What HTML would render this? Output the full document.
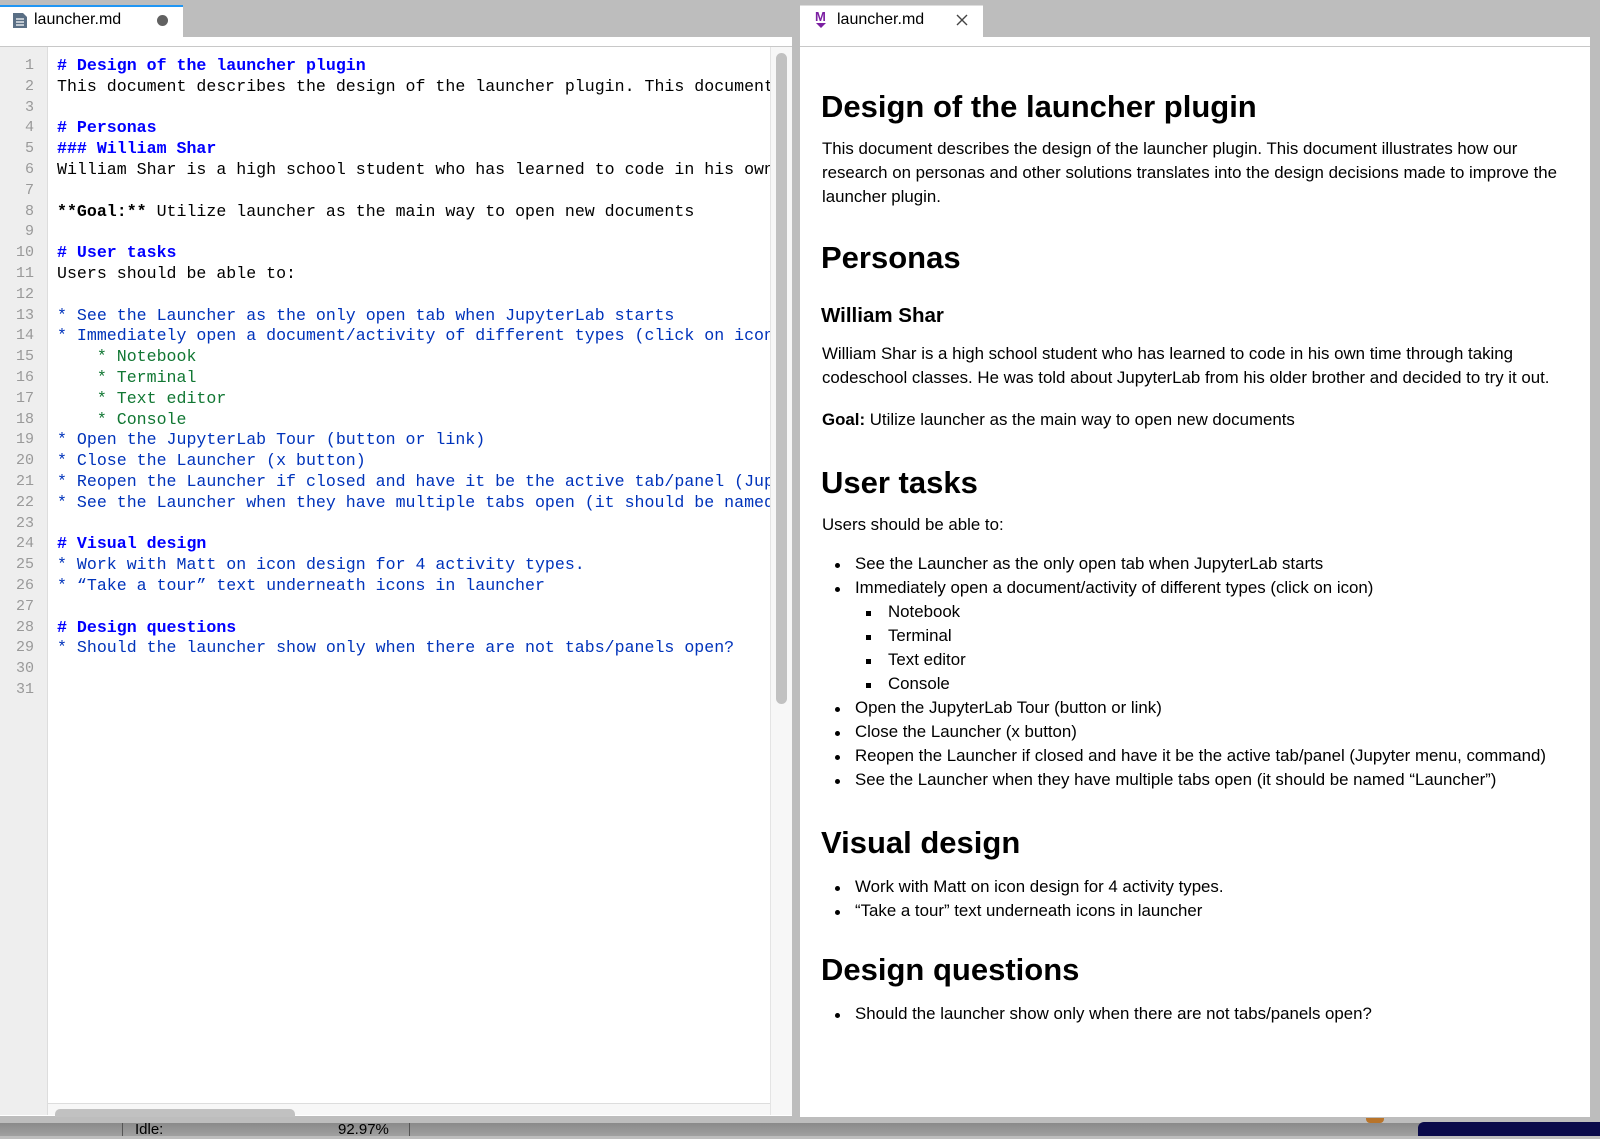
<!DOCTYPE html>
<html><head><meta charset="utf-8"><style>
*{margin:0;padding:0;box-sizing:border-box}
body{width:1600px;height:1136px;background:#bdbdbd;position:relative;overflow:hidden;font-family:"Liberation Sans",Arial,sans-serif}
.a{position:absolute;white-space:pre}
.code{font-family:"Liberation Mono","Courier New",monospace;font-size:16.6px;line-height:20.8px;color:#000}
.ln{font-family:"Liberation Mono",monospace;font-size:15px;line-height:20.8px;color:#999;text-align:right;width:34px;left:0}
.h{color:#0000ff;font-weight:bold}
.b{color:#0033bb}
.g{color:#117733}
.md{font-size:16.85px;line-height:24px;color:#000}
.h1{font-size:31px;font-weight:bold;line-height:40px;color:#000}
.h3{font-size:20.5px;font-weight:bold;line-height:28px}
.dot{position:absolute;width:5px;height:5px;border-radius:50%;background:#000}
.sq{position:absolute;width:5px;height:5px;background:#000}
</style></head><body>
<!-- left tab -->
<div class="a" style="left:0;top:5px;width:183px;height:32px;background:#fff;border-top:2px solid #2196f3"></div>
<svg class="a" style="left:12px;top:12px" width="16" height="17" viewBox="0 0 16 17"><path d="M1 1h10l4 4v11H1z" fill="#5a6f85"/><path d="M4 7h8M4 10h8M4 13h8" stroke="#fff" stroke-width="1.3"/></svg>
<div class="a" style="left:34px;top:10px;font-size:16px;line-height:20px;color:#000">launcher.md</div>
<div class="a" style="left:157px;top:15px;width:11px;height:11px;border-radius:50%;background:#616161"></div>
<!-- left panel -->
<div class="a" style="left:0;top:37px;width:792px;height:1079px;background:#fff"></div>
<div class="a" style="left:0;top:46px;width:792px;height:1px;background:#c8c8c8"></div>
<div class="a" style="left:0;top:47px;width:48px;height:1068px;background:#eee;border-right:1px solid #ddd"></div>
<div class="a" style="left:770px;top:47px;width:22px;height:1068px;background:#f7f7f7;border-left:1px solid #e4e4e4"></div>
<div class="a" style="left:776px;top:53px;width:11px;height:651px;border-radius:6px;background:#c1c1c1"></div>
<div class="a" style="left:48px;top:1103px;width:722px;height:1px;background:#ddd"></div>
<div class="a" style="left:48px;top:1104px;width:722px;height:11px;background:#f7f7f7"></div>
<div class="a" style="left:55px;top:1109px;width:240px;height:8px;border-radius:5px 5px 0 0;background:#c1c1c1"></div>
<div class="a ln" style="top:56px">1
2
3
4
5
6
7
8
9
10
11
12
13
14
15
16
17
18
19
20
21
22
23
24
25
26
27
28
29
30
31</div>
<div class="a code" style="left:57px;top:56px;width:713px;overflow:hidden"><span class="h"># Design of the launcher plugin</span>
This document describes the design of the launcher plugin. This document illustrates

<span class="h"># Personas</span>
<span class="h">### William Shar</span>
William Shar is a high school student who has learned to code in his own time

<b>**Goal:**</b> Utilize launcher as the main way to open new documents

<span class="h"># User tasks</span>
Users should be able to:

<span class="b">* See the Launcher as the only open tab when JupyterLab starts</span>
<span class="b">* Immediately open a document/activity of different types (click on icon)</span>
<span class="g">    * Notebook</span>
<span class="g">    * Terminal</span>
<span class="g">    * Text editor</span>
<span class="g">    * Console</span>
<span class="b">* Open the JupyterLab Tour (button or link)</span>
<span class="b">* Close the Launcher (x button)</span>
<span class="b">* Reopen the Launcher if closed and have it be the active tab/panel (Jupyter menu</span>
<span class="b">* See the Launcher when they have multiple tabs open (it should be named "Launcher")</span>

<span class="h"># Visual design</span>
<span class="b">* Work with Matt on icon design for 4 activity types.</span>
<span class="b">* “Take a tour” text underneath icons in launcher</span>

<span class="h"># Design questions</span>
<span class="b">* Should the launcher show only when there are not tabs/panels open?</span>
</div>
<!-- right tab -->
<div class="a" style="left:800px;top:5px;width:183px;height:32px;background:#fff;border-top:1px solid #ddd"></div>
<div class="a" style="left:815px;top:10px;font-size:13px;font-weight:bold;color:#7b1fa2;line-height:13px">M</div>
<div class="a" style="left:816px;top:23px;width:0;height:0;border-left:5px solid transparent;border-right:5px solid transparent;border-top:5px solid #7b1fa2"></div>
<div class="a" style="left:837px;top:10px;font-size:16px;line-height:20px;color:#000">launcher.md</div>
<svg class="a" style="left:956px;top:14px" width="12" height="12"><path d="M1 1L11 11M11 1L1 11" stroke="#444" stroke-width="1.4"/></svg>
<!-- right panel -->
<div class="a" style="left:800px;top:37px;width:790px;height:1080px;background:#fff"></div>
<div class="a" style="left:800px;top:46px;width:790px;height:1px;background:#c8c8c8"></div>
<div class="a h1" style="left:821px;top:87px">Design of the launcher plugin</div>
<div class="a md" style="left:822px;top:137px">This document describes the design of the launcher plugin. This document illustrates how our
research on personas and other solutions translates into the design decisions made to improve the
launcher plugin.</div>
<div class="a h1" style="left:821px;top:238px">Personas</div>
<div class="a h3" style="left:821px;top:302px">William Shar</div>
<div class="a md" style="left:822px;top:342px">William Shar is a high school student who has learned to code in his own time through taking
codeschool classes. He was told about JupyterLab from his older brother and decided to try it out.</div>
<div class="a md" style="left:822px;top:408px"><b>Goal:</b> Utilize launcher as the main way to open new documents</div>
<div class="a h1" style="left:821px;top:463px">User tasks</div>
<div class="a md" style="left:822px;top:513px">Users should be able to:</div>
<div class="a md" style="left:855px;top:552px">See the Launcher as the only open tab when JupyterLab starts
Immediately open a document/activity of different types (click on icon)</div>
<div class="a md" style="left:888px;top:600px">Notebook
Terminal
Text editor
Console</div>
<div class="a md" style="left:855px;top:696px">Open the JupyterLab Tour (button or link)
Close the Launcher (x button)
Reopen the Launcher if closed and have it be the active tab/panel (Jupyter menu, command)
See the Launcher when they have multiple tabs open (it should be named “Launcher”)</div>
<div class="dot" style="left:835px;top:563px"></div><div class="dot" style="left:835px;top:587px"></div>
<div class="sq" style="left:866px;top:611px"></div><div class="sq" style="left:866px;top:635px"></div><div class="sq" style="left:866px;top:659px"></div><div class="sq" style="left:866px;top:683px"></div>
<div class="dot" style="left:835px;top:707px"></div><div class="dot" style="left:835px;top:731px"></div><div class="dot" style="left:835px;top:755px"></div><div class="dot" style="left:835px;top:779px"></div>
<div class="a h1" style="left:821px;top:823px">Visual design</div>
<div class="a md" style="left:855px;top:875px">Work with Matt on icon design for 4 activity types.
“Take a tour” text underneath icons in launcher</div>
<div class="dot" style="left:835px;top:886px"></div><div class="dot" style="left:835px;top:910px"></div>
<div class="a h1" style="left:821px;top:950px">Design questions</div>
<div class="a md" style="left:855px;top:1002px">Should the launcher show only when there are not tabs/panels open?</div>
<div class="dot" style="left:835px;top:1013px"></div>
<!-- status bar -->
<div class="a" style="left:0;top:1123px;width:1600px;height:13px;background:linear-gradient(#8a8a8a,#a0a0a0)"></div>
<div class="a" style="left:122px;top:1123px;width:1px;height:13px;background:#555"></div>
<div class="a" style="left:409px;top:1123px;width:1px;height:13px;background:#555"></div>
<div class="a" style="left:135px;top:1121px;font-size:15px;line-height:18px;color:#000">Idle:</div>
<div class="a" style="left:338px;top:1121px;font-size:15px;line-height:18px;color:#000">92.97%</div>
<div class="a" style="left:1366px;top:1118px;width:18px;height:5px;background:#b8742a;border-radius:0 0 4px 4px"></div>
<div class="a" style="left:1418px;top:1122px;width:182px;height:14px;background:#0a0a4a;border-radius:6px 0 0 0"></div>
</body></html>
